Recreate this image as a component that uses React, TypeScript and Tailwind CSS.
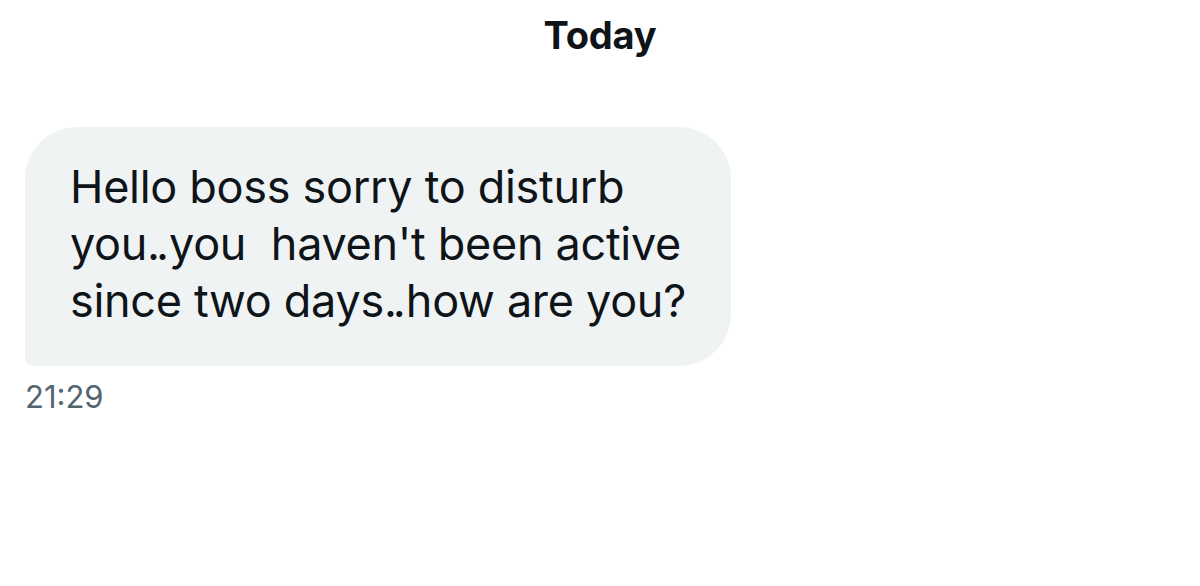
export default function App() {
  // ".." in the source font is narrower than in Inter, so tighten it
  const renderLine = (line: string) =>
    line.split("..").map((part, i, arr) => (
      <span key={i}>
        {part}
        {i < arr.length - 1 && <span className="tracking-[-4px] mr-[4px]">..</span>}
      </span>
    ));

  const lines = [
    "Hello boss sorry to disturb",
    "you..you  haven't been active",
    "since two days..how are you?",
  ];

  return (
    <div className="w-[1200px] h-[586px] bg-white font-['Inter',sans-serif] text-[#0f1419] overflow-hidden">
      {/* ── Day separator ─────────────────────────── */}
      <div className="pt-[12px] flex justify-center">
        <span className="text-[38px] leading-[46px] font-bold tracking-[-0.2px]">Today</span>
      </div>

      {/* ── Message ───────────────────────────────── */}
      <div className="mt-[69px] pl-[25px] flex flex-col items-start">
        <div className="w-[706px] bg-[#eff3f4] rounded-[52px] rounded-bl-[8px] pl-[45px] pt-[31px] pb-[37px]">
          {lines.map((line) => (
            <div key={line} className="text-[45px] leading-[57px] whitespace-pre tracking-[-0.3px]">
              {renderLine(line)}
            </div>
          ))}
        </div>
        <span className="mt-[13px] text-[31px] leading-[36px] text-[#536471]">21:29</span>
      </div>
    </div>
  );
}
